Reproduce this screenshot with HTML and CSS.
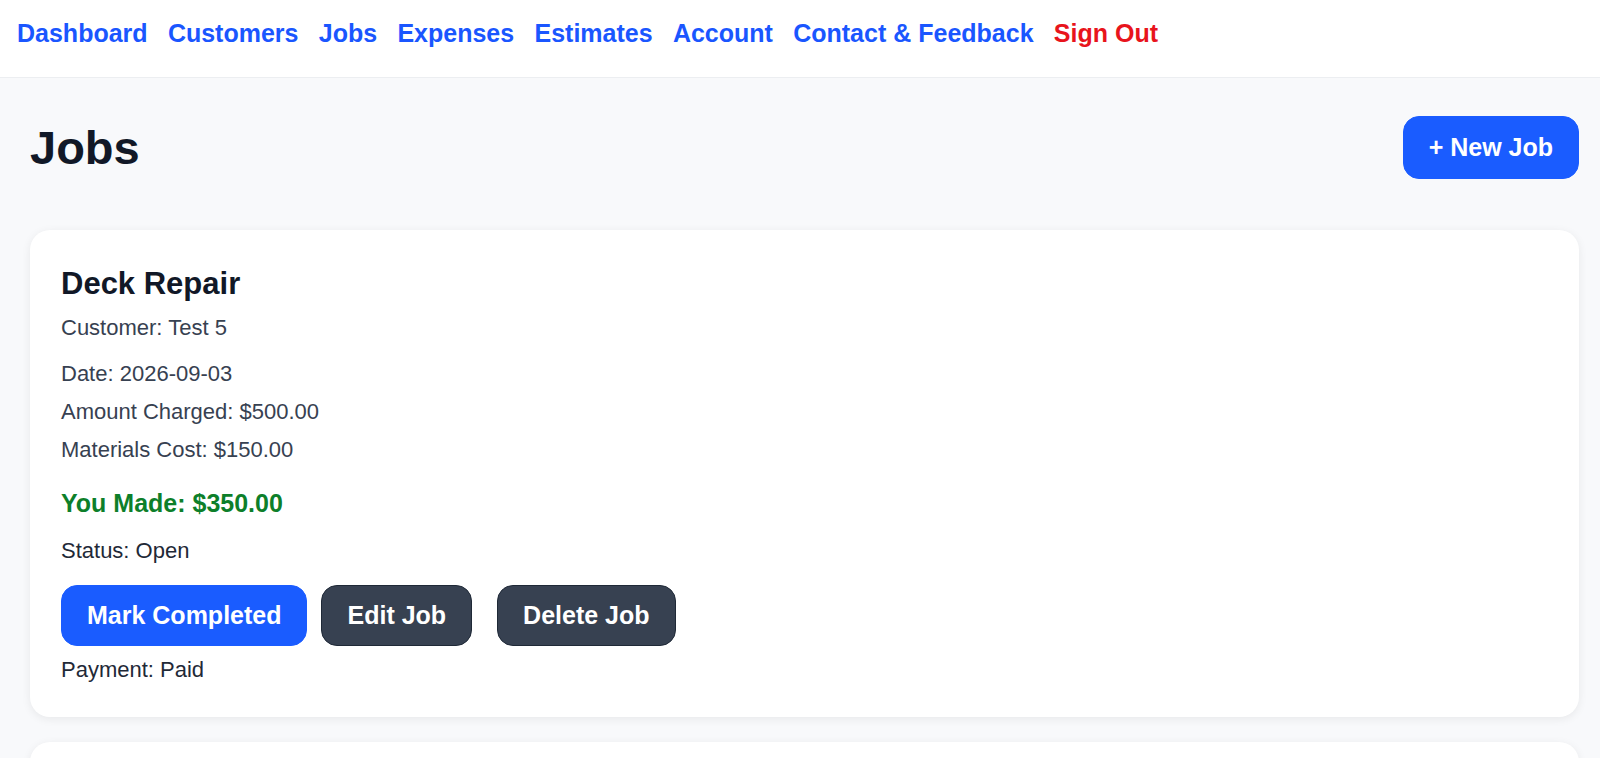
FILE: index.html
```html
<!DOCTYPE html>
<html lang="en">
<head>
    <meta charset="UTF-8">
    <meta name="viewport" content="width=device-width, initial-scale=1.0">
    <title>Jobs</title>
    <link rel="stylesheet" href="styles.css">
</head>
<body>
    <header class="topbar">
        <nav class="nav">
            <a href="#">Dashboard</a>
            <a href="#">Customers</a>
            <a href="#">Jobs</a>
            <a href="#">Expenses</a>
            <a href="#">Estimates</a>
            <a href="#">Account</a>
            <a href="#">Contact &amp; Feedback</a>
            <a href="#" class="signout">Sign Out</a>
        </nav>
    </header>

    <main class="page">
        <div class="page-head">
            <h1>Jobs</h1>
            <a href="#" class="btn btn-primary">+ New Job</a>
        </div>

        <div class="job-list">
            <div class="job-card">
                <h3 class="job-title">Deck Repair</h3>
                <p class="job-line job-customer">Customer: Test 5</p>
                <p class="job-line">Date: 2026-09-03</p>
                <p class="job-line">Amount Charged: $500.00</p>
                <p class="job-line">Materials Cost: $150.00</p>
                <p class="job-profit">You Made: $350.00</p>
                <p class="job-line job-status">Status: Open</p>
                <div class="job-actions">
                    <button class="btn btn-primary">Mark Completed</button>
                    <button class="btn btn-dark">Edit Job</button>
                    <form class="inline-form">
                        <button type="button" class="btn btn-dark">Delete Job</button>
                    </form>
                </div>
                <p class="job-line job-payment">Payment: Paid</p>
            </div>

            <div class="job-card">
                <h3 class="job-title">Fence Install</h3>
                <p class="job-line job-customer">Customer: Test 4</p>
                <p class="job-line">Date: 2026-08-21</p>
                <p class="job-line">Amount Charged: $1200.00</p>
                <p class="job-line">Materials Cost: $400.00</p>
                <p class="job-profit">You Made: $800.00</p>
                <p class="job-line job-status">Status: Open</p>
            </div>
        </div>
    </main>
</body>
</html>
```

FILE: styles.css
```css
body {
    margin: 0;
    font-family: "Liberation Sans", Arial, Helvetica, sans-serif;
    background: #f8f9fb;
    color: #1f2937;
}
.topbar {
    background: #fff;
    padding: 19px 17px 29px;
    border-bottom: 1px solid #eceef1;
}
.nav {
    display: flex;
    gap: 20.3px;
}
.nav a {
    color: #1a56ff;
    font-size: 25px;
    font-weight: bold;
    text-decoration: none;
}
.nav a.signout { color: #e8141c; }

.page {
    padding: 38px 21px 0 30px;
}
.page-head {
    display: flex;
    justify-content: space-between;
    align-items: center;
    margin-bottom: 51px;
}
.page-head h1 {
    margin: 0;
    font-size: 47px;
    color: #111827;
}

.btn {
    display: inline-block;
    font-family: inherit;
    font-size: 25px;
    font-weight: bold;
    line-height: normal;
    color: #fff;
    text-decoration: none;
    border: 1px solid transparent;
    border-radius: 16px;
    padding: 16px 25px;
    cursor: pointer;
}
.btn-primary { background: #1a5cff; border-color: #1a5cff; }
.btn-dark { background: #374151; border-color: #1f2937; }
.job-actions .btn { padding: 15px 25px; }

.job-card {
    background: #fff;
    border-radius: 20px;
    box-shadow: 0 2px 10px rgba(0,0,0,0.07);
    padding: 36px 31px 34px;
    margin-bottom: 25px;
}
.job-title {
    margin: 0 0 13px;
    font-size: 31px;
    color: #111827;
}
.job-line {
    margin: 0 0 12px;
    font-size: 22px;
    color: #374151;
}
.job-customer { margin-bottom: 20px; }
.job-profit {
    margin: 26px 0 20px;
    font-size: 25px;
    font-weight: bold;
    color: #0d7f2a;
}
.job-status { color: #1f2937; margin-bottom: 21px; }
.job-actions {
    display: flex;
    gap: 14px;
    margin-bottom: 11px;
}
.inline-form { margin: 0 0 0 11px; }
.job-payment { color: #1f2937; margin-bottom: 0; }
```
